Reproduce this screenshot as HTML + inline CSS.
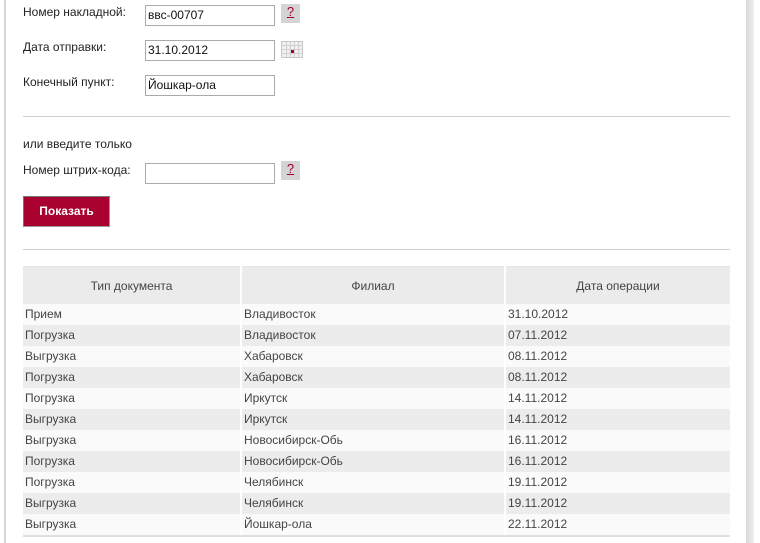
<!DOCTYPE html>
<html><head><meta charset="utf-8"><style>
body{margin:0;width:760px;height:543px;background:#fff;font-family:"Liberation Sans",Arial,sans-serif;font-size:12px;color:#222;position:relative;overflow:hidden}
.lb{position:absolute;left:4px;top:0;width:2px;height:543px;background:#d6d6d6}
.rb{position:absolute;left:746px;top:0;width:8px;height:543px;background:linear-gradient(90deg,#d8d8d8,#eee)}
.a{position:absolute}
.lbl{position:absolute;left:23px}
.inp{position:absolute;left:145px;height:19px;border:1px solid #aaa;box-sizing:content-box;font-size:12px;line-height:19px;padding-left:2px;width:126px;color:#111}
.q{position:absolute;left:281px;width:19px;height:19px;background:#d4d4d4;color:#a0002a;text-align:center;text-decoration:underline;line-height:16px;font-size:13px}
.hr{position:absolute;left:23px;width:707px;height:1px;background:#cfcfcf}
.btn{position:absolute;left:23px;top:196px;width:85px;height:29px;background:#a8002f;border:1px solid #777;border-right-color:#999;border-bottom-color:#999;color:#fff;font-weight:bold;text-align:center;line-height:29px}
table{position:absolute;left:23px;top:266px;width:707px;border-collapse:collapse;color:#444}
th{background:#ebebeb;font-weight:normal;height:37px;padding:0;border-left:2px solid #fff;border-top:1px solid #e4e4e4;color:#444}
th:first-child,td:first-child{border-left:0}
td{height:21px;padding:0 2px;border-left:2px solid #fff;line-height:21px}
tr:nth-child(even) td{background:#fafafa}
tr:nth-child(odd) td{background:#ececec}
tr:last-child td{border-bottom:2px solid #e0e0e0}
</style></head><body>
<div class="lb"></div><div class="rb"></div>
<div class="lbl" style="top:5px">Номер накладной:</div>
<div class="inp" style="top:5px">ввс-00707</div>
<div class="q" style="top:4px">?</div>
<div class="lbl" style="top:40px">Дата отправки:</div>
<div class="inp" style="top:40px">31.10.2012</div>
<svg class="a" style="left:281px;top:41px" width="22" height="17"><rect x="0.5" y="0.5" width="21" height="16" fill="#f0f0f0" stroke="#c8c8c8"/><g stroke="#d0d0d0" stroke-width="1"><path d="M1 4.5H21M1 8.5H21M1 12.5H21M5.5 1V16M9.5 1V16M13.5 1V16M17.5 1V16"/></g><rect x="10" y="9" width="3" height="3" fill="#a8002f"/></svg>
<div class="lbl" style="top:75px">Конечный пункт:</div>
<div class="inp" style="top:75px">Йошкар-ола</div>
<div class="hr" style="top:116px"></div>
<div class="lbl" style="top:137px">или введите только</div>
<div class="lbl" style="top:163px">Номер штрих-кода:</div>
<div class="inp" style="top:163px"></div>
<div class="q" style="top:161px">?</div>
<div class="btn">Показать</div>
<div class="hr" style="top:249px"></div>
<table>
<tr><th style="width:217px">Тип документа</th><th style="width:262px">Филиал</th><th>Дата операции</th></tr>
<tr><td>Прием</td><td>Владивосток</td><td>31.10.2012</td></tr>
<tr><td>Погрузка</td><td>Владивосток</td><td>07.11.2012</td></tr>
<tr><td>Выгрузка</td><td>Хабаровск</td><td>08.11.2012</td></tr>
<tr><td>Погрузка</td><td>Хабаровск</td><td>08.11.2012</td></tr>
<tr><td>Погрузка</td><td>Иркутск</td><td>14.11.2012</td></tr>
<tr><td>Выгрузка</td><td>Иркутск</td><td>14.11.2012</td></tr>
<tr><td>Выгрузка</td><td>Новосибирск-Обь</td><td>16.11.2012</td></tr>
<tr><td>Погрузка</td><td>Новосибирск-Обь</td><td>16.11.2012</td></tr>
<tr><td>Погрузка</td><td>Челябинск</td><td>19.11.2012</td></tr>
<tr><td>Выгрузка</td><td>Челябинск</td><td>19.11.2012</td></tr>
<tr><td>Выгрузка</td><td>Йошкар-ола</td><td>22.11.2012</td></tr>
</table>
</body></html>
